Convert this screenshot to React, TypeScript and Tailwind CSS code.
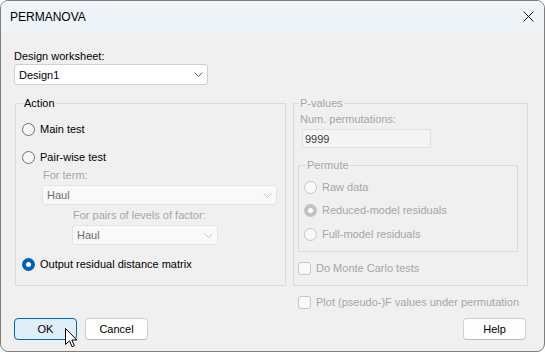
import React from "react";

// Windows 11 style PERMANOVA dialog

function Radio({ checked, disabled }: { checked?: boolean; disabled?: boolean }) {
  if (checked) {
    return (
      <span
        className={`flex h-[13px] w-[13px] shrink-0 items-center justify-center rounded-full ${
          disabled ? "bg-[#c2c2c2]" : "bg-[#005fb8]"
        }`}
      >
        <span className="h-[5px] w-[5px] rounded-full bg-white" />
      </span>
    );
  }
  return (
    <span
      className={`h-[13px] w-[13px] shrink-0 rounded-full border ${
        disabled ? "border-[#c6c6c6] bg-[#f9f9f9]" : "border-[#707070] bg-[#f6f6f6]"
      }`}
    />
  );
}

function Checkbox() {
  return <span className="h-[13px] w-[13px] shrink-0 rounded-[3px] border border-[#c6c6c6] bg-[#f9f9f9]" />;
}

function Chevron({ disabled }: { disabled?: boolean }) {
  return (
    <svg width="9" height="5" viewBox="0 0 9 5" className="shrink-0">
      <polyline
        points="0.5,0.5 4.5,4.5 8.5,0.5"
        fill="none"
        stroke={disabled ? "#c4c4c4" : "#606060"}
        strokeWidth="1"
      />
    </svg>
  );
}

function Combo({ value, disabled, className = "" }: { value: string; disabled?: boolean; className?: string }) {
  return (
    <div
      className={`flex items-center justify-between rounded-[3px] border pl-[4px] pr-[4px] ${
        disabled ? "border-[#e4e4e4] bg-[#f9f9f9] text-[#6d6d6d]" : "border-[#d0d0d0] bg-white text-black"
      } ${className}`}
    >
      <span>{value}</span>
      <Chevron disabled={disabled} />
    </div>
  );
}

function Button({ label, primary }: { label: string; primary?: boolean }) {
  return (
    <div
      className={`flex h-[22px] w-[63px] items-center justify-center rounded-[4px] border text-black ${
        primary ? "border-[#0067c0] bg-[#e0eef9]" : "border-[#d0d0d0] border-b-[#bcbcbc] bg-[#fdfdfd]"
      }`}
    >
      {label}
    </div>
  );
}

function Cursor() {
  return (
    <svg width="13" height="20" viewBox="0 0 13 20" className="pointer-events-none absolute left-[65px] top-[328px]">
      <path
        d="M0.5 0.5 L0.5 16.5 L4.5 12.8 L7 18.7 L9.3 17.7 L6.9 12 L11.8 12 Z"
        fill="#fff"
        stroke="#000"
        strokeWidth="1"
        strokeLinejoin="round"
      />
    </svg>
  );
}

export default function App() {
  return (
    <div className="relative h-[353px] w-[545px] whitespace-nowrap bg-white font-['Liberation_Sans',Arial,sans-serif] text-[11px] leading-[16px] text-black">
      <div className="flex h-[352px] w-full flex-col overflow-hidden rounded-[8px] border border-[#7e7e7e] bg-[#f0f0f0]">
        {/* title bar */}
        <div className="flex h-[31px] shrink-0 items-center justify-between bg-[#eff4f9] pl-[9px] pr-[10px]">
          <span className="text-[12px]">PERMANOVA</span>
          <svg width="11" height="11" viewBox="0 0 11 11">
            <path d="M0.5 0.5 L10.5 10.5 M10.5 0.5 L0.5 10.5" stroke="#1a1a1a" strokeWidth="1" />
          </svg>
        </div>

        {/* body */}
        <div className="flex flex-col pl-[13px] pr-[18px] pt-[16px]">
          <div>Design worksheet:</div>
          <Combo value="Design1" className="h-[21px] w-[194px]" />

          <div className="mt-[10px] grid grid-cols-[272px_235px] gap-x-[7px]">
            {/* Action */}
            <fieldset className="ml-[1px] h-[191px] border border-[#dcdcdc] pl-[6px]">
              <legend className="ml-[1px] px-[1px]">Action</legend>
              <div className="mt-[10px] flex items-center gap-[5px]">
                <Radio />
                <span>Main test</span>
              </div>
              <div className="mt-[12px] flex items-center gap-[5px]">
                <Radio />
                <span>Pair-wise test</span>
              </div>
              <div className="ml-[21px] mt-[2px] text-[#a6a6a6]">For term:</div>
              <Combo value="Haul" disabled className="ml-[20px] mt-[2px] h-[20px] w-[235px]" />
              <div className="ml-[51px] mt-[2px] text-[#a6a6a6]">For pairs of levels of factor:</div>
              <Combo value="Haul" disabled className="ml-[50px] mt-[2px] h-[20px] w-[146px]" />
              <div className="mt-[11px] flex items-center gap-[5px]">
                <Radio checked />
                <span>Output residual distance matrix</span>
              </div>
            </fieldset>

            {/* P-values */}
            <fieldset className="h-[191px] border border-[#dcdcdc] pl-[4px] text-[#a6a6a6]">
              <legend className="ml-[1px] px-[1px]">P-values</legend>
              <div className="ml-[2px]">Num. permutations:</div>
              <div className="ml-[4px] mt-[2px] flex h-[19px] w-[129px] items-center border border-[#e2e2e2] bg-[#f4f4f4] pl-[2px] text-[#3a3a3a]">
                9999
              </div>
              <fieldset className="mt-[9px] h-[95px] w-[220px] border border-[#dcdcdc] pl-[5px]">
                <legend className="ml-[2px] px-[1px]">Permute</legend>
                <div className="mt-[6px] flex items-center gap-[5px]">
                  <Radio disabled />
                  <span>Raw data</span>
                </div>
                <div className="mt-[7px] flex items-center gap-[5px]">
                  <Radio disabled checked />
                  <span>Reduced-model residuals</span>
                </div>
                <div className="mt-[8px] flex items-center gap-[5px]">
                  <Radio disabled />
                  <span>Full-model residuals</span>
                </div>
              </fieldset>
              <div className="mt-[8px] flex items-center gap-[5px]">
                <Checkbox />
                <span>Do Monte Carlo tests</span>
              </div>
            </fieldset>

            <div className="col-start-2 mt-[8px] flex items-center gap-[5px] pl-[5px] text-[#a6a6a6]">
              <Checkbox />
              <span>Plot (pseudo-)F values under permutation</span>
            </div>
          </div>

          <div className="mt-[8px] flex items-center">
            <Button label="OK" primary />
            <div className="ml-[8px]">
              <Button label="Cancel" />
            </div>
            <div className="ml-auto">
              <Button label="Help" />
            </div>
          </div>
        </div>
      </div>
      <Cursor />
    </div>
  );
}
